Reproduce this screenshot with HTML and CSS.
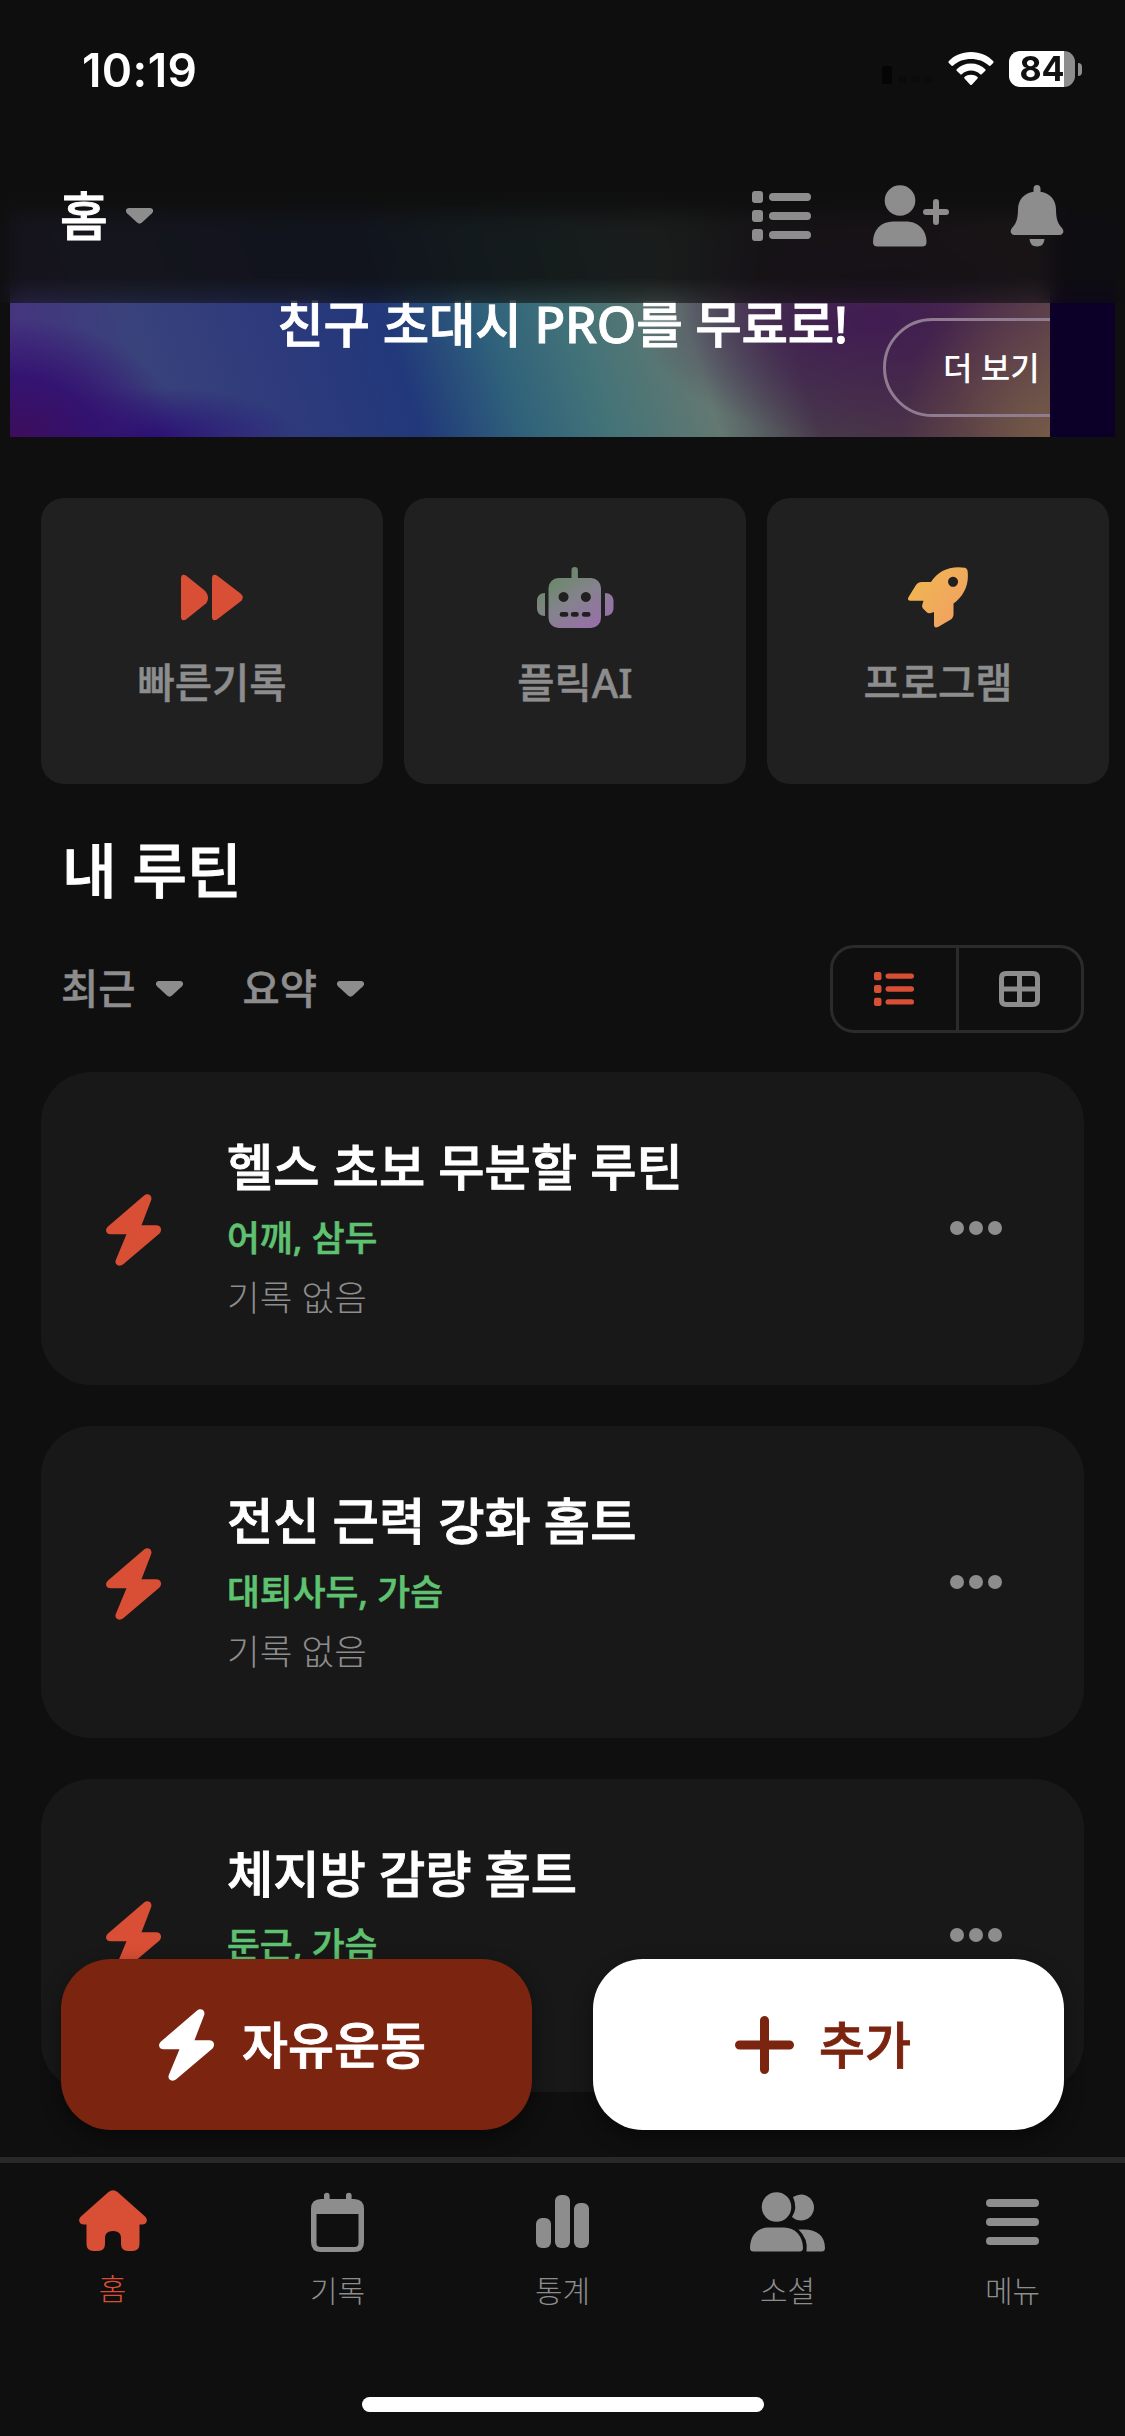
FILE: index.html
```html
<!DOCTYPE html>
<html lang="ko">
<head>
<meta charset="utf-8">
<title>홈</title>
<link rel="stylesheet" href="styles.css">
</head>
<body>
<svg class="defs" width="0" height="0" aria-hidden="true">
  <defs>
    <linearGradient id="robot-fill" x1="0.1" y1="0" x2="0.9" y2="1"><stop offset="0.1" stop-color="#658a63"/><stop offset="0.5" stop-color="#84838c"/><stop offset="0.9" stop-color="#9870a8"/></linearGradient>
    <linearGradient id="rocket-fill" x1="0" y1="0" x2="1" y2="0.8"><stop offset="0" stop-color="#f0b94e"/><stop offset="1" stop-color="#f1a063"/></linearGradient>
    <symbol id="bolt" viewBox="0 0 55 72"><path d="M37.5 2C41 -1.8 46.8 1 45.2 6L35.5 31.2H50C55 31.2 56.5 36 53.5 39.5L17.5 70C13 73.8 8 70.5 9.8 66L20.5 40.3H5C-.2 40.3 -1.5 36 2 32.5Z"/></symbol>
    <symbol id="caret" viewBox="0 0 27 16"><path d="M3 0H24C27 0 28 3 26 5.2L16 14.5Q13.500 16.800 11 14.500L1 5.200C-1 3 0 0 3 0Z"/></symbol>
    <symbol id="list" viewBox="0 0 59 50"><rect width="11" height="12" rx="3"/><rect y="19" width="11" height="12" rx="3"/><rect y="38" width="11" height="12" rx="3"/><rect x="17" y="2" width="42" height="8" rx="4"/><rect x="17" y="21" width="42" height="8" rx="4"/><rect x="17" y="40" width="42" height="8" rx="4"/></symbol>
    <symbol id="dots" viewBox="0 0 52 14"><circle cx="7" cy="7" r="7"/><circle cx="26" cy="7" r="7"/><circle cx="45" cy="7" r="7"/></symbol>
  </defs>
</svg>
<div class="screen">
  <header class="header">
    <div class="status">
      <span class="clock">10:19</span>
      <div class="indicators">
        <svg width="60" height="20" viewBox="0 0 60 20"><g fill="#050505"><rect width="10" height="18" rx="2"/><rect x="16" y="10" width="9" height="7" rx="3" opacity=".35"/><rect x="29" y="10" width="9" height="7" rx="3" opacity=".35"/><rect x="42" y="10" width="9" height="7" rx="3" opacity=".35"/></g></svg>
        <svg class="wifi" width="46" height="34" viewBox="0 0 46 34"><path d="M23 0C32 0 40 3.500 45.300 9.200Q46 10 45.200 10.900L42.400 13.700Q41.600 14.300 40.800 13.500C36 9 30 6.900 23 6.900S10 9 5.200 13.500Q4.400 14.300 3.600 13.700L.8 10.900Q0 10 .7 9.200C6 3.500 14 0 23 0Z"/><path d="M23 11.500C28.500 11.500 33.500 13.500 37.300 17.200Q38 18 37.300 18.700L33.700 22.200Q33 22.800 32.200 22.200C29.500 19.800 26.500 18.600 23 18.600S16.500 19.800 13.800 22.200Q13 22.800 12.300 22.200L8.700 18.700Q8 18 8.700 17.200C12.500 13.500 17.500 11.500 23 11.500Z"/><path d="M23 22.700C25.500 22.700 27.700 23.500 29.500 25Q30.200 25.800 29.500 26.500L24 32.400Q23 33.500 22 32.400L16.500 26.500Q15.800 25.800 16.500 25C18.300 23.500 20.500 22.700 23 22.700Z"/></svg>
        <div class="battery"><span>84</span></div>
        <i class="battery-tip"></i>
      </div>
    </div>
    <div class="toolbar">
      <h1 class="page-title">홈</h1>
      <svg class="title-caret" width="27" height="16"><use href="#caret"/></svg>
      <div class="tools">
        <svg width="59" height="50"><use href="#list"/></svg>
        <svg width="77" height="62" viewBox="0 0 77 62"><circle cx="27" cy="15.500" r="15.300"/><path d="M0 57C0 45 8 36.500 20 36.500H33C45 36.500 53.500 45 53.500 57Q53.500 61.500 49 61.500H4.500Q0 61.500 0 57Z"/><path d="M63 17V37M53 27H73" fill="none" stroke="#8d8d8e" stroke-width="6" stroke-linecap="round"/></svg>
        <svg width="54" height="62" viewBox="0 0 54 62"><path d="M27 0Q30.500 0 30.500 4V6.800C40 8.300 46 15 46 24.500C46 36 49 39.500 52 43Q54.500 46.500 52.500 48.500Q51.500 50 49.500 50H4.500Q2.500 50 1.500 48.500Q-.5 46.500 2 43C5 39.500 8 36 8 24.500C8 15 14 8.300 23.500 6.800V4Q23.500 0 27 0Z"/><path d="M19.500 54H34.500Q34 61.500 27 61.500T19.500 54Z"/></svg>
      </div>
    </div>
  </header>

  <main class="content">
    <section class="banner">
      <div class="banner-art">
        <p class="banner-title">친구 초대시 PRO를 무료로!</p>
        <span class="banner-more">더 보기</span>
      </div>
    </section>

    <section class="shortcuts">
      <a class="shortcut">
        <svg class="fast-icon" width="64" height="62" viewBox="0 0 64 62"><path d="M1 12Q1 6 6 8.500L24 23Q28 26.500 28 31T24 38L6 52.500Q1 55 1 49.500ZM32 12Q32 6 37 8.500L60.500 26.500Q65 30.500 60.500 34.500L37 52.500Q32 55 32 49.500Z"/></svg>
        <span>빠른기록</span>
      </a>
      <a class="shortcut">
        <svg width="77" height="62" viewBox="0 0 77 62"><path fill="url(#robot-fill)" fill-rule="evenodd" d="M34.500 11V3.200a3.200 3.200 0 0 1 6.400 0V11H54a10 10 0 0 1 10 10V51a10 10 0 0 1-10 10H21.500a10 10 0 0 1-10-10V21a10 10 0 0 1 10-10ZM26.500 25a5 5 0 1 0 .1 0ZM48.800 25a5 5 0 1 0 .1 0ZM25 45h4a2.400 2.400 0 0 1 0 4.800h-4a2.400 2.400 0 0 1 0-4.800ZM36.200 45h3.200a2.400 2.400 0 0 1 0 4.800h-3.200a2.400 2.400 0 0 1 0-4.800ZM47.200 45h4a2.400 2.400 0 0 1 0 4.800h-4a2.400 2.400 0 0 1 0-4.800ZM8 26V49C3 49 0 46 0 41V34C0 29 3 26 8 26ZM68 26C73 26 76.500 29 76.500 34V41C76.500 46 73 49 68 49Z"/></svg>
        <span>플릭AI</span>
      </a>
      <a class="shortcut">
        <svg width="60" height="62" viewBox="0 0 60 62"><path fill="url(#rocket-fill)" fill-rule="evenodd" d="M.6 30L8 18Q10 15 14 15H23C30 4 42-1.500 57 .800Q59 1.200 59.500 3.500C61.500 17 56 29 45.500 36.500V47Q45.500 51 42 53L30 60Q26 61.500 26 57.500V45L22 46.200Q20 46.500 18.500 45L15 41.500Q13.800 40 14.200 38L15.500 33.800H3Q-1.500 33.800 .6 30ZM45 9.800a5 5 0 1 0 .1 0Z"/></svg>
        <span>프로그램</span>
      </a>
    </section>

    <h2 class="section-title">내 루틴</h2>
    <div class="filters">
      <span class="filter">최근<svg width="27" height="16"><use href="#caret"/></svg></span>
      <span class="filter">요약<svg width="27" height="16"><use href="#caret"/></svg></span>
      <div class="view-switch">
        <span class="view view-active"><svg width="40" height="34"><use href="#list"/></svg></span>
        <span class="view"><svg width="41" height="36" viewBox="0 0 41 36"><path fill="none" stroke="#8d8d8e" stroke-width="5" d="M7 2.500H34Q38.500 2.500 38.500 7V29Q38.500 33.500 34 33.500H7Q2.500 33.500 2.500 29V7Q2.500 2.500 7 2.500ZM20.500 2.500V33.500M2.500 18H38.500"/></svg></span>
      </div>
    </div>

    <section class="routines">
      <article class="routine">
        <svg class="routine-icon" width="55" height="72"><use href="#bolt"/></svg>
        <div class="routine-text"><h3>헬스 초보 무분할 루틴</h3><p class="muscles">어깨, 삼두</p><p class="log">기록 없음</p></div>
        <svg class="routine-menu" width="52" height="14"><use href="#dots"/></svg>
      </article>
      <article class="routine">
        <svg class="routine-icon" width="55" height="72"><use href="#bolt"/></svg>
        <div class="routine-text"><h3>전신 근력 강화 홈트</h3><p class="muscles">대퇴사두, 가슴</p><p class="log">기록 없음</p></div>
        <svg class="routine-menu" width="52" height="14"><use href="#dots"/></svg>
      </article>
      <article class="routine">
        <svg class="routine-icon" width="55" height="72"><use href="#bolt"/></svg>
        <div class="routine-text"><h3>체지방 감량 홈트</h3><p class="muscles">둔근, 가슴</p></div>
        <svg class="routine-menu" width="52" height="14"><use href="#dots"/></svg>
      </article>
    </section>
  </main>

  <div class="actions">
    <button class="action action-free"><svg width="55" height="72"><use href="#bolt"/></svg>자유운동</button>
    <button class="action action-add"><svg width="59" height="58" viewBox="0 0 59 58"><path fill="none" stroke="#7b2410" stroke-width="9" stroke-linecap="round" d="M29.500 4.500V53.500M4.500 29H54.500"/></svg>추가</button>
  </div>

  <nav class="tabbar">
    <a class="tab tab-active"><svg width="68" height="62" viewBox="0 0 68 62"><path d="M29.500 2Q34 -1.500 38.500 2L65.500 26C70 30 67.500 34.500 63 34.500H60.500V54Q60.500 61 53.500 61H49Q42 61 42 54V48Q42 41 34 41T26 48V54Q26 61 19 61H14.500Q7.500 61 7.500 54V34.500H5C.5 34.500-2 30 2.500 26Z"/></svg><span>홈</span></a>
    <a class="tab"><svg width="53" height="62" viewBox="0 0 53 62"><path fill-rule="evenodd" d="M13 9V5.500a2.800 2.800 0 0 1 5.600 0V9H35V5.500a2.800 2.800 0 0 1 5.600 0V9H43Q53 9 53 19V52Q53 62 43 62H10Q0 62 0 52V19Q0 9 10 9ZM5.500 24V53Q5.500 57 9.500 57H43.500Q47.500 57 47.500 53V24Z"/></svg><span>기록</span></a>
    <a class="tab"><svg width="53" height="62" viewBox="0 0 53 62"><rect y="28" width="15" height="30" rx="6"/><rect x="19" y="5" width="15" height="53" rx="6"/><rect x="38" y="13" width="15" height="45" rx="6"/></svg><span>통계</span></a>
    <a class="tab"><svg width="75" height="62" viewBox="0 0 75 62"><circle cx="26.500" cy="17" r="14.800"/><path d="M43 7Q47 4.500 51 4.500A13 13 0 0 1 51 30.500Q46 30.500 42 27Q48 18 43 7Z"/><path d="M0 58C0 46 7 37.500 18 37.500H34C45 37.500 53 46 53 58Q53 61.500 49.500 61.500H3.500Q0 61.500 0 58Z"/><path d="M48.500 39.500H54C67 39.500 75 46 75 58Q75 61.500 71.500 61.500H56.500Q58.500 49 48.500 39.500Z"/></svg><span>소셜</span></a>
    <a class="tab"><svg width="53" height="62" viewBox="0 0 53 62"><rect y="9" width="53" height="8" rx="4"/><rect y="28" width="53" height="8" rx="4"/><rect y="47" width="53" height="8" rx="4"/></svg><span>메뉴</span></a>
    <i class="home-indicator"></i>
  </nav>
</div>
</body>
</html>
```
FILE: styles.css
```css
* { box-sizing: border-box; margin: 0; padding: 0; }
body { background: #0f0f0f; font-family: "Noto Sans", "Noto Sans CJK KR", sans-serif; color: #fff; font-weight: 500; }
svg { display: block; flex: none; fill: #8d8d8e; }
h1, h2, h3 { font-weight: 500; }
h1, h2, h3, .banner-title, .action { -webkit-text-stroke: .9px currentColor; }
i { display: block; }
.defs { position: absolute; }
.screen { position: relative; display: flex; flex-direction: column; width: 1125px; height: 2436px; overflow: hidden; background: #0f0f0f; }

/* header floats over the scrolled content and blurs it */
.header { position: absolute; top: 0; left: 0; z-index: 2; width: 100%; height: 303px; background: linear-gradient(rgba(15,15,15,.87) 278px, rgba(15,15,15,.6) 303px); backdrop-filter: blur(10px); }
.status { display: flex; justify-content: space-between; height: 138px; padding: 0 43px 0 82px; }
.clock { padding-top: 43px; font: 600 46px/54px Inter, sans-serif; letter-spacing: .4px; }
.indicators { display: flex; align-items: center; height: 138px; }
.indicators > svg:first-child { margin-top: 14px; }
.wifi { margin: 0 15px 0 6px; fill: #fff; }
.battery { width: 66px; height: 36px; border-radius: 11px; background: linear-gradient(90deg, #fff 55px, #8d8d8e 55px); font: 700 34px/36px Inter, sans-serif; color: #111; text-align: center; }
.battery-tip { width: 4px; height: 13px; margin-left: 3px; border-radius: 0 5px 5px 0; background: #8d8d8e; }
.toolbar { display: flex; align-items: center; height: 156px; padding: 0 61px 0 60px; }
.page-title { font-size: 52px; line-height: 80px; }
.title-caret { margin-left: 18px; }
.tools { display: flex; align-items: center; margin-left: auto; }
.tools svg { margin-left: 62px; }
.tools svg:last-child { margin-left: 60px; }

.content { flex: 1; min-height: 0; overflow: hidden; padding-top: 213px; }
.banner { height: 224px; margin: 0 10px; background: #0d0028; }
.banner-art { position: relative; width: 1040px; height: 224px; overflow: hidden; background:
  radial-gradient(ellipse 170px 120px at 0 100%, #3d0d5c 0, #32106fe6 50%, #2d167000 100%),
  radial-gradient(ellipse 150px 50px at 140px 100%, #2b1076 0, #2b107600 100%),
  radial-gradient(ellipse 150px 170px at 100% 100%, #755a48 0, #755a4800 100%),
  radial-gradient(ellipse 230px 120px at 860px 48%, #401c52 0, #401c5200 100%),
  linear-gradient(72deg, #493080 0, #39427b 14%, #2e3a7c 26%, #21387a 37%, #2f617b 46%, #437378 54%, #637871 64%, #47384b 73%, #4b3044 86%, #5e434b 100%); }
.banner-title { padding-top: 71px; padding-left: 65px; text-align: center; font-size: 50.500px; line-height: 80px; letter-spacing: -.2px; white-space: nowrap; }
.banner-more { position: absolute; left: 873px; top: 105px; width: 220px; height: 99px; padding-left: 57px; border: 3px solid #8f7c90; border-radius: 50px; font-size: 32px; line-height: 94px; }

.shortcuts { display: flex; gap: 21px; padding: 61px 0 0 41px; }
.shortcut { display: flex; flex: none; flex-direction: column; align-items: center; width: 342px; height: 286px; padding-top: 69px; border-radius: 23px; background: #202020; color: #8d8d8e; font-size: 40.500px; line-height: 60px; -webkit-text-stroke: .5px currentColor; }
.shortcut span { margin-top: 24px; }
.fast-icon { fill: #d94f36; }

.section-title { margin: 43px 0 0 62px; font-size: 59.500px; line-height: 86px; }
.filters { display: flex; align-items: center; height: 88px; margin: 32px 41px 0 61px; }
.filter { display: flex; align-items: center; gap: 20px; margin-right: 60px; color: #8d8d8e; font-size: 40.500px; line-height: 60px; -webkit-text-stroke: .5px currentColor; }
.view-switch { display: flex; width: 254px; height: 88px; margin-left: auto; border: 3px solid #2b2b2b; border-radius: 24px; }
.view { display: flex; flex: 1; align-items: center; justify-content: center; }
.view + .view { border-left: 3px solid #2b2b2b; }
.view-active svg { fill: #d94f36; }

.routines { display: flex; flex-direction: column; gap: 41px; padding: 39px 41px 0; }
.routine { display: flex; flex: none; align-items: flex-start; height: 312.500px; padding: 0 82px 0 65px; border-radius: 50px; background: #181818; }
.routine-icon { margin-top: 122px; fill: #d94f36; }
.routine-text { flex: 1; margin: 55px 0 0 66px; }
.routine-menu { margin-top: 149px; }
.routine h3 { font-size: 50.300px; line-height: 80px; }
.muscles { margin-top: 3px; color: #5fc270; font-size: 35.700px; line-height: 54px; -webkit-text-stroke: .6px currentColor; }
.log { margin-top: 6px; color: #8d8d8e; font-size: 35.500px; line-height: 54px; font-weight: 300; }

/* floating buttons over the list */
.actions { position: absolute; top: 1959px; left: 61px; display: flex; gap: 61px; }
.action { display: flex; align-items: center; justify-content: center; width: 471px; height: 171px; padding-right: 8px; border: 0; border-radius: 50px; font: inherit; font-size: 50px; line-height: 80px; box-shadow: 0 8px 20px rgba(0,0,0,.45); }
.action-free { gap: 28px; background: #7b2410; color: #fff; }
.action-free svg { fill: #fff; }
.action-add { gap: 25px; padding-right: 11px; background: #fff; color: #7b2410; }

.tabbar { position: relative; display: grid; grid-template-columns: repeat(5, 1fr); flex: none; height: 279px; padding-top: 27px; border-top: 6px solid #282828; background: #0f0f0f; }
.tab { display: flex; flex-direction: column; align-items: center; gap: 17px; color: #8d8d8e; font-size: 30px; line-height: 44px; font-weight: 300; }
.tab-active { gap: 15px; color: #d94f36; }
.tab-active svg { fill: #d94f36; }
.home-indicator { position: absolute; left: 362px; top: 234px; width: 402px; height: 15px; border-radius: 8px; background: #fff; }
```
